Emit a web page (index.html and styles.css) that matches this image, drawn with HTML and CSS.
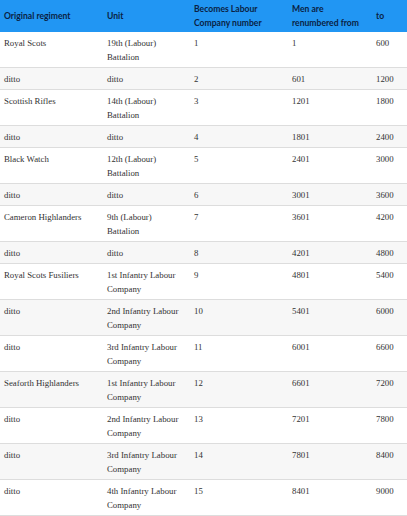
FILE: index.html
```html
<!DOCTYPE html>
<html lang="en">
<head>
<meta charset="utf-8">
<title>Labour Companies</title>
<link rel="stylesheet" href="styles.css">
</head>
<body>
<table class="units">
  <colgroup>
    <col class="c1"><col class="c2"><col class="c3"><col class="c4"><col class="c5">
  </colgroup>
  <thead>
    <tr class="head-row">
      <th class="head-cell">Original regiment</th>
      <th class="head-cell">Unit</th>
      <th class="head-cell">Becomes Labour Company number</th>
      <th class="head-cell">Men are renumbered from</th>
      <th class="head-cell">to</th>
    </tr>
  </thead>
  <tbody>
    <tr><td>Royal Scots</td><td>19th (Labour) Battalion</td><td>1</td><td>1</td><td>600</td></tr>
    <tr><td>ditto</td><td>ditto</td><td>2</td><td>601</td><td>1200</td></tr>
    <tr><td>Scottish Rifles</td><td>14th (Labour) Battalion</td><td>3</td><td>1201</td><td>1800</td></tr>
    <tr><td>ditto</td><td>ditto</td><td>4</td><td>1801</td><td>2400</td></tr>
    <tr><td>Black Watch</td><td>12th (Labour) Battalion</td><td>5</td><td>2401</td><td>3000</td></tr>
    <tr><td>ditto</td><td>ditto</td><td>6</td><td>3001</td><td>3600</td></tr>
    <tr><td>Cameron Highlanders</td><td>9th (Labour) Battalion</td><td>7</td><td>3601</td><td>4200</td></tr>
    <tr><td>ditto</td><td>ditto</td><td>8</td><td>4201</td><td>4800</td></tr>
    <tr><td>Royal Scots Fusiliers</td><td>1st Infantry Labour Company</td><td>9</td><td>4801</td><td>5400</td></tr>
    <tr><td>ditto</td><td>2nd Infantry Labour Company</td><td>10</td><td>5401</td><td>6000</td></tr>
    <tr><td>ditto</td><td>3rd Infantry Labour Company</td><td>11</td><td>6001</td><td>6600</td></tr>
    <tr><td>Seaforth Highlanders</td><td>1st Infantry Labour Company</td><td>12</td><td>6601</td><td>7200</td></tr>
    <tr><td>ditto</td><td>2nd Infantry Labour Company</td><td>13</td><td>7201</td><td>7800</td></tr>
    <tr><td>ditto</td><td>3rd Infantry Labour Company</td><td>14</td><td>7801</td><td>8400</td></tr>
    <tr><td>ditto</td><td>4th Infantry Labour Company</td><td>15</td><td>8401</td><td>9000</td></tr>
  </tbody>
</table>
</body>
</html>
```

FILE: styles.css
```css
html, body {
  margin: 0;
  padding: 0;
  background: #ffffff;
}

.units {
  width: 407px;
  table-layout: fixed;
  border-collapse: collapse;
  border-spacing: 0;
}

.c1 { width: 103px; }
.c2 { width: 87px; }
.c3 { width: 98px; }
.c4 { width: 84px; }
.c5 { width: 35px; }

.head-row {
  background: #2196f3;
}

.head-cell {
  color: #0a1f44;
  font-family: Lato, "Open Sans", sans-serif;
  font-weight: 700;
  font-size: 8.6px;
  line-height: 14px;
  text-align: left;
  vertical-align: middle;
  padding: 2px 4px;
  height: 28px;
}

.units td {
  font-family: "Liberation Serif", "DejaVu Serif", serif;
  font-size: 8.8px;
  line-height: 14px;
  color: #333333;
  vertical-align: top;
  padding: 4px 4px 3px 4px;
  border-bottom: 1px solid #dddddd;
}

.units tbody tr:nth-child(even) td {
  background: #f7f7f7;
}
```
